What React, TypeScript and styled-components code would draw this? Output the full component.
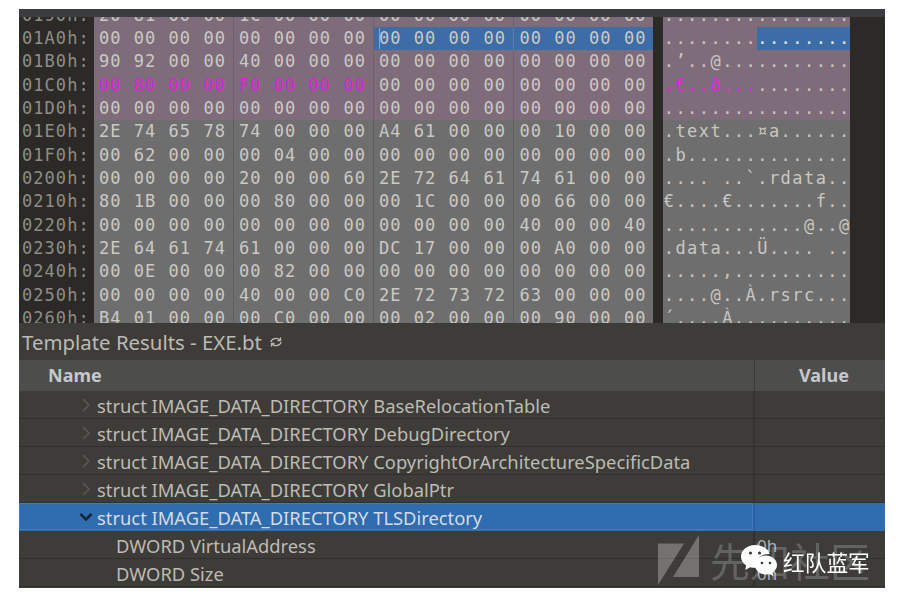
import React from "react";
import styled, { createGlobalStyle } from "styled-components";

const Global = createGlobalStyle`
  html, body { margin: 0; padding: 0; background: #fff; }
  body { width: 899px; height: 602px; overflow: hidden; }
`;

const Page = styled.div`
  padding: 9px 14px 0 19px;
  position: relative;
  filter: blur(0.45px);
`;

const Window = styled.div`
  width: 866px;
  height: 579px;
  background: #3d3c38;
  display: flex;
  flex-direction: column;
  position: relative;
  overflow: hidden;
`;

const TopBar = styled.div`
  height: 8px;
  flex: none;
  background: #3a3c3f;
`;

const HexView = styled.div`
  height: 306px;
  flex: none;
  overflow: hidden;
  background: #2b2a26;
`;

const HexScroll = styled.div`
  margin-top: -13.3px;
  display: flex;
  flex-direction: column;
`;

const HexRow = styled.div`
  height: 23.33px;
  display: flex;
  font-family: "DejaVu Sans Mono", monospace;
  font-size: 17px;
  line-height: 23.33px;
`;

const Address = styled.div`
  width: 75px;
  flex: none;
  padding-left: 3px;
  box-sizing: border-box;
  color: #8f8d86;
  letter-spacing: 1.05px;
  white-space: pre;
`;

const Group = styled.div<{ $tint: string; $sep: string; $sel?: boolean; $last?: boolean }>`
  width: ${(p) => (p.$last ? "139px" : "140px")};
  flex: none;
  box-sizing: border-box;
  padding-left: ${(p) => (p.$last ? "5.5px" : "5px")};
  display: flex;
  background: ${(p) => (p.$sel ? "#3c6da6" : p.$tint)};
  border-right: ${(p) => (p.$last ? "none" : `1px solid ${p.$sel ? "#5a7fa8" : p.$sep}`)};
  position: relative;
`;

const Byte = styled.span<{ $hot?: boolean }>`
  width: 34.8px;
  flex: none;
  letter-spacing: 1px;
  color: ${(p) => (p.$hot ? "#dd1fdd" : "#cbc9c4")};
`;

const Caret = styled.i`
  position: absolute;
  left: 5px;
  top: 1px;
  bottom: 1px;
  width: 1px;
  background: #9aa3ad;
`;

const Gutter = styled.div`
  width: 10px;
  flex: none;
`;

const AsciiCell = styled.div<{ $tint: string }>`
  width: 187px;
  flex: none;
  display: flex;
  background: ${(p) => p.$tint};
  overflow: hidden;
`;

const AsciiChar = styled.span<{ $hot?: boolean; $sel?: boolean }>`
  width: 11.69px;
  flex: none;
  text-align: center;
  white-space: pre;
  color: ${(p) => (p.$hot ? "#e61ee6" : p.$sel ? "#e2e6ea" : "#c9c7c2")};
  background: ${(p) => (p.$sel ? "#3c6da6" : "transparent")};
`;

const TitleBar = styled.div`
  height: 37px;
  flex: none;
  display: flex;
  align-items: center;
  gap: 7px;
  padding-left: 3px;
  background: #3d3c38;
  color: #bcbab2;
  font-family: "Noto Sans", sans-serif;
  font-size: 20.4px;
  letter-spacing: 0;
`;

const Header = styled.div`
  height: 31px;
  flex: none;
  display: flex;
  background: #4d4d4c;
  font-family: "Noto Sans", sans-serif;
  font-size: 18px;
  font-weight: 700;
  color: #c5c8cc;
  line-height: 31px;
`;

const NameHead = styled.div`
  width: 736px;
  flex: none;
  box-sizing: border-box;
  padding-left: 29px;
  border-right: 1px solid #3a3a38;
`;

const ValueHead = styled.div`
  flex: 1;
  padding-left: 44px;
`;

const Row = styled.div<{ $sel?: boolean }>`
  height: 28px;
  flex: none;
  display: flex;
  box-sizing: border-box;
  background: ${(p) => (p.$sel ? "#2f6cb0" : "#3d3c38")};
  border-bottom: 1px solid ${(p) => (p.$sel ? "#2f6cb0" : "#30302d")};
`;

const NameCell = styled.div<{ $sel?: boolean; $indent: number }>`
  width: 736px;
  flex: none;
  box-sizing: border-box;
  display: flex;
  align-items: center;
  padding-top: 2px;
  padding-left: ${(p) => p.$indent}px;
  border-right: 2px solid ${(p) => (p.$sel ? "#2a5f9b" : "#33322f")};
  box-shadow: ${(p) => (p.$sel ? "inset 0 0 0 1px #3a7cc6" : "none")};
  color: ${(p) => (p.$sel ? "#d6dbe2" : "#bdbbb3")};
  font-family: "Noto Sans", sans-serif;
  font-size: 18.35px;
  white-space: nowrap;
`;

const Chevron = styled.svg<{ $sel?: boolean }>`
  width: 16px;
  height: 16px;
  flex: none;
  margin-right: 3px;
  margin-top: -2px;
  fill: none;
  stroke: ${(p) => (p.$sel ? "#14263c" : "#595852")};
  stroke-width: ${(p) => (p.$sel ? 2.6 : 1.6)};
`;

const ValueCell = styled.div`
  flex: 1;
  padding: 2px 0 0 2px;
  color: #a9b0b8;
  font-family: "Noto Sans", sans-serif;
  font-size: 17px;
  line-height: 26px;
`;

const Watermark = styled.div`
  position: absolute;
  left: 658px;
  top: 535px;
  height: 50px;
  display: flex;
  align-items: center;
  gap: 10px;
  color: rgba(255, 255, 255, 0.2);
  font-family: "Noto Sans CJK SC", sans-serif;
  font-size: 40px;
  white-space: nowrap;
`;

const WatermarkLogo = styled.svg`
  width: 42px;
  height: 50px;
  flex: none;
  fill: rgba(255, 255, 255, 0.28);
`;

const Brand = styled.div`
  position: absolute;
  left: 741px;
  top: 544px;
  display: flex;
  align-items: center;
  gap: 6px;
  color: #fff;
  font-family: "Noto Sans CJK SC", sans-serif;
  font-size: 21.7px;
  white-space: nowrap;
`;

const PURPLE = "#7f6c7b";
const GRAY = "#6e6e6e";

const zeros = "00 00 00 00 00 00 00 00 00 00 00 00 00 00 00 00";
const dots = "................";

const rows: { a: string; h: string; t: string; p?: boolean; hot?: boolean; sel?: boolean }[] = [
  { a: "0190h:", h: "20 81 00 00 1C 00 00 00 00 00 00 00 00 00 00 00", t: dots, p: true },
  { a: "01A0h:", h: zeros, t: dots, p: true, sel: true },
  { a: "01B0h:", h: "90 92 00 00 40 00 00 00 00 00 00 00 00 00 00 00", t: ".’..@...........", p: true },
  { a: "01C0h:", h: "00 80 00 00 F0 00 00 00 00 00 00 00 00 00 00 00", t: ".€..ð...........", p: true, hot: true },
  { a: "01D0h:", h: zeros, t: dots, p: true },
  { a: "01E0h:", h: "2E 74 65 78 74 00 00 00 A4 61 00 00 00 10 00 00", t: ".text...¤a......" },
  { a: "01F0h:", h: "00 62 00 00 00 04 00 00 00 00 00 00 00 00 00 00", t: ".b.............." },
  { a: "0200h:", h: "00 00 00 00 20 00 00 60 2E 72 64 61 74 61 00 00", t: ".... ..`.rdata.." },
  { a: "0210h:", h: "80 1B 00 00 00 80 00 00 00 1C 00 00 00 66 00 00", t: "€....€.......f.." },
  { a: "0220h:", h: "00 00 00 00 00 00 00 00 00 00 00 00 40 00 00 40", t: "............@..@" },
  { a: "0230h:", h: "2E 64 61 74 61 00 00 00 DC 17 00 00 00 A0 00 00", t: ".data...Ü.... .." },
  { a: "0240h:", h: "00 0E 00 00 00 82 00 00 00 00 00 00 00 00 00 00", t: ".....‚.........." },
  { a: "0250h:", h: "00 00 00 00 40 00 00 C0 2E 72 73 72 63 00 00 00", t: "....@..À.rsrc..." },
  { a: "0260h:", h: "B4 01 00 00 00 C0 00 00 00 02 00 00 00 90 00 00", t: "´....À.........." },
];

const tree = [
  "BaseRelocationTable",
  "DebugDirectory",
  "CopyrightOrArchitectureSpecificData",
  "GlobalPtr",
];

function HexLine({ r }: { r: (typeof rows)[number] }) {
  const bytes = r.h.split(" ");
  const tint = r.p ? PURPLE : GRAY;
  const sep = r.p ? "#6d6170" : "#5e5e5e";
  return (
    <HexRow>
      <Address>{r.a}</Address>
      {[0, 1, 2, 3].map((g) => (
        <Group key={g} $tint={tint} $sep={sep} $sel={r.sel && g >= 2} $last={g === 3}>
          {r.sel && g === 2 && <Caret />}
          {bytes.slice(g * 4, g * 4 + 4).map((b, i) => (
            <Byte key={i} $hot={r.hot && g < 2}>
              {b}
            </Byte>
          ))}
        </Group>
      ))}
      <Gutter />
      <AsciiCell $tint={tint}>
        {Array.from(r.t).map((c, i) => (
          <AsciiChar key={i} $hot={r.hot && i < 8} $sel={r.sel && i >= 8}>
            {c}
          </AsciiChar>
        ))}
      </AsciiCell>
    </HexRow>
  );
}

export default function App() {
  return (
    <Page>
      <Global />
      <Window>
        <TopBar />
        <HexView>
          <HexScroll>
            {rows.map((r) => (
              <HexLine key={r.a} r={r} />
            ))}
          </HexScroll>
        </HexView>
        <TitleBar>
          Template Results - EXE.bt
          <svg width="14" height="12" viewBox="0 0 14 12" fill="none" stroke="#bcbab2" strokeWidth="1.3">
            <path d="M2 6a5 4 0 0 1 9-2" />
            <path d="M12 6a5 4 0 0 1-9 2" />
            <path d="M11.5 1.5V4.5H8.5" />
            <path d="M2.5 10.5V7.5H5.5" />
          </svg>
        </TitleBar>
        <Header>
          <NameHead>Name</NameHead>
          <ValueHead>Value</ValueHead>
        </Header>
        {tree.map((n) => (
          <Row key={n}>
            <NameCell $indent={59}>
              <Chevron viewBox="0 0 16 16">
                <path d="M5 2l6 6-6 6" />
              </Chevron>
              struct IMAGE_DATA_DIRECTORY {n}
            </NameCell>
            <ValueCell />
          </Row>
        ))}
        <Row $sel>
          <NameCell $sel $indent={59}>
            <Chevron $sel viewBox="0 0 16 16">
              <path d="M2.5 5l5.5 5.5L13.500 5" />
            </Chevron>
            struct IMAGE_DATA_DIRECTORY TLSDirectory
          </NameCell>
          <ValueCell />
        </Row>
        <Row>
          <NameCell $indent={97}>DWORD VirtualAddress</NameCell>
          <ValueCell>0h</ValueCell>
        </Row>
        <Row>
          <NameCell $indent={97}>DWORD Size</NameCell>
          <ValueCell>0h</ValueCell>
        </Row>
      </Window>
      <Watermark>
        <WatermarkLogo viewBox="0 0 42 50">
          <path d="M0 8.500H26L0 50Z" />
          <path d="M41 0V42H15Z" />
        </WatermarkLogo>
        先知社区
      </Watermark>
      <Brand>
        <svg width="36" height="34" viewBox="0 0 36 34" fill="#fff">
          <path d="M14 1C6.500 1 0 6 0 12.500c0 3.700 2 6.700 5.200 9l-1 4.500 5-2.800c1.500.4 3 .6 4.800.6.500 0 1 0 1.500-.1-.3-1-.5-2-.5-3 0-6 5.500-10.700 12.500-10.700h1.300C27 4.500 21 1 14 1z" />
          <path d="M36 21c0-5.500-5.200-9.500-11-9.500-6.200 0-11 4.200-11 9.500s4.800 9.500 11 9.500c1.200 0 2.500-.2 3.700-.5l3.800 2.300-1-3.700c2.700-2 4.500-4.600 4.500-7.600z" />
          <g fill="#3d3c38">
            <circle cx="9.500" cy="9" r="1.600" />
            <circle cx="18.500" cy="9" r="1.600" />
            <circle cx="21" cy="19" r="1.300" />
            <circle cx="29" cy="19" r="1.300" />
          </g>
        </svg>
        红队蓝军
      </Brand>
    </Page>
  );
}
